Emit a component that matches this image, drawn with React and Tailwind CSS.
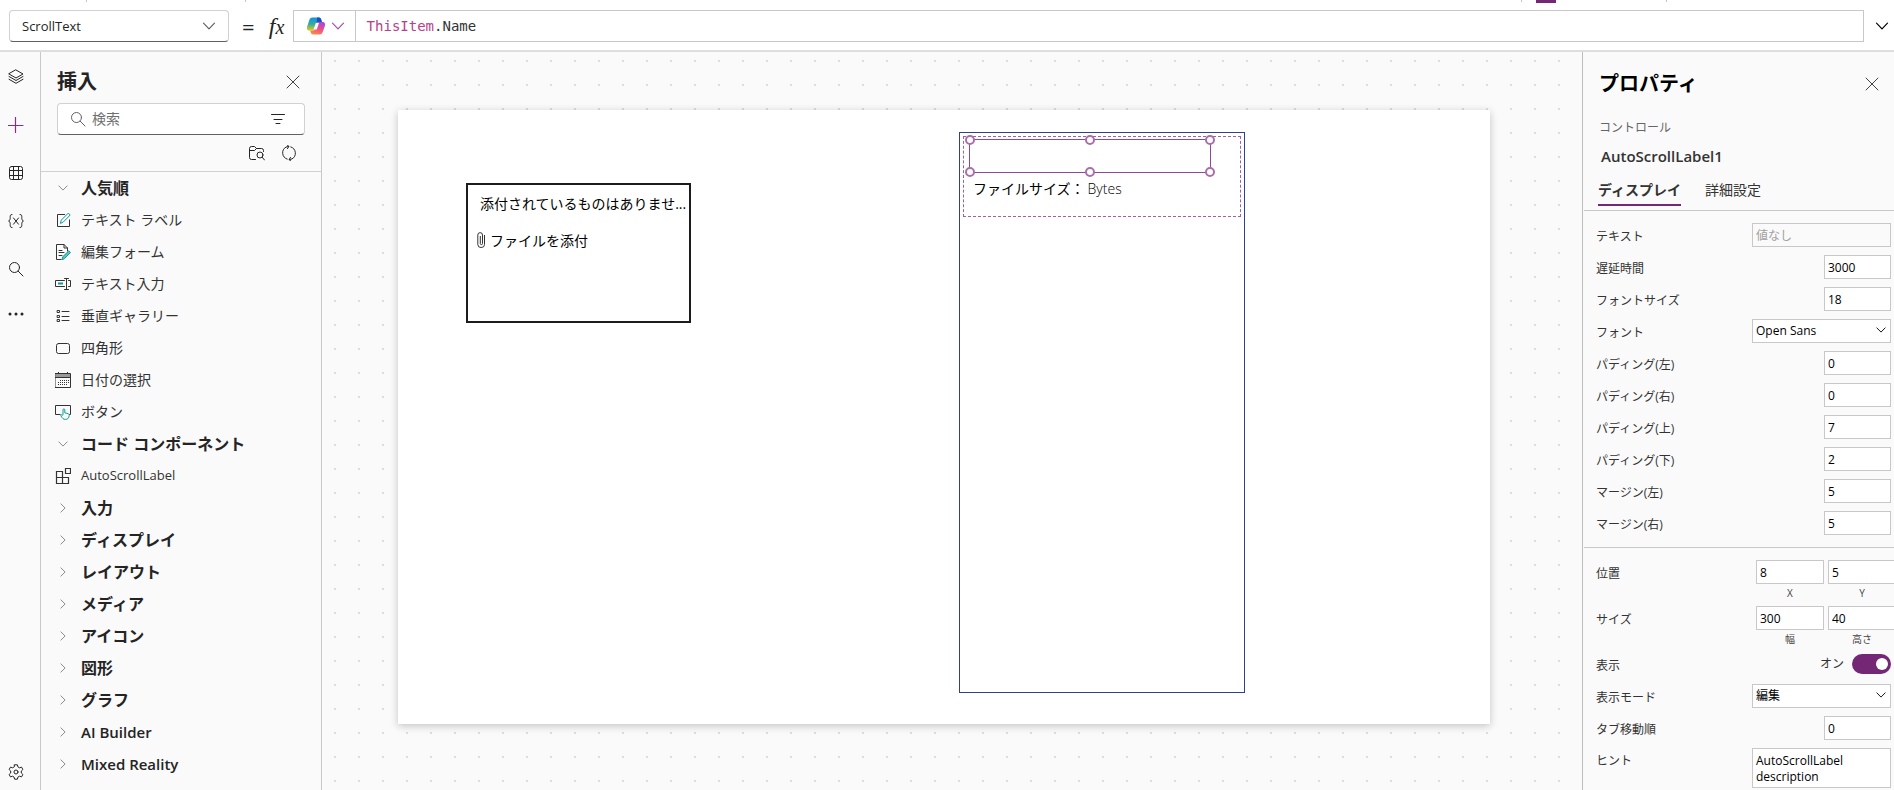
import React, { useState } from 'react';

function Icon({ className = '', size = 16, children }) {
  return (
    <svg
      width={size}
      height={size}
      viewBox="0 0 16 16"
      fill="none"
      stroke="currentColor"
      strokeLinecap="round"
      strokeLinejoin="round"
      className={`shrink-0 ${className}`}
      aria-hidden="true"
    >
      {children}
    </svg>
  );
}

const ChevronDown = (props) => (
  <Icon {...props}><path d="M2.5 5.2 8 10.8l5.5-5.6" strokeWidth="1.2" /></Icon>
);
const ChevronRight = (props) => (
  <Icon {...props}><path d="M5.2 2.5 10.8 8l-5.6 5.5" strokeWidth="1.2" /></Icon>
);
const CloseIcon = (props) => (
  <Icon {...props}><path d="m2 2 12 12M14 2 2 14" /></Icon>
);
const SearchIcon = (props) => (
  <Icon {...props}><circle cx="6.5" cy="6.5" r="5" /><path d="m10.2 10.2 4.8 4.8" /></Icon>
);
const FilterIcon = (props) => (
  <Icon {...props}><path d="M1.5 3.5h13M4 8.5h8M6 12.5h4" /></Icon>
);
const LayersIcon = (props) => (
  <Icon {...props}>
    <path d="M8 1 15 5 8 9 1 5z" />
    <path d="m1 7.5 7 4 7-4" />
    <path d="m1 10.3 7 4 7-4" />
  </Icon>
);
const GridIcon = (props) => (
  <Icon {...props}>
    <rect x="1.5" y="1.5" width="13" height="13" rx="2" />
    <path d="M5.5 1.5v13M10.5 1.5v13M1.5 5.5h13M1.5 10.5h13" />
  </Icon>
);
const VariableIcon = (props) => (
  <Icon {...props}>
    <path d="M4 1.5c-2 0-1.8 1.2-1.8 3S1.9 7.6.6 8c1.3.4 1.6 1.7 1.6 3.5s-.2 3 1.8 3M12 1.5c2 0 1.8 1.2 1.8 3s.3 3.1 1.6 3.5c-1.3.4-1.6 1.7-1.6 3.5s.2 3-1.8 3" />
    <path d="m5.500 5 5 6.200M10.500 5l-5 6.200" />
  </Icon>
);
const MoreIcon = (props) => (
  <Icon {...props}>
    <g fill="currentColor" stroke="none">
      <circle cx="2" cy="8" r="1.5" /><circle cx="8" cy="8" r="1.5" /><circle cx="14" cy="8" r="1.5" />
    </g>
  </Icon>
);
const GearIcon = (props) => (
  <Icon {...props}>
    <path d="M6.6.8h2.800l.5 2.100 1.500.9 2.100-.7 1.400 2.400-1.600 1.500v2l1.600 1.500-1.400 2.400-2.100-.7-1.500.9-.5 2.100H6.600l-.5-2.100-1.500-.9-2.100.7-1.400-2.400L2.700 9V7L1.100 5.500l1.400-2.400 2.100.7 1.500-.9z" />
    <circle cx="8" cy="8" r="2" />
  </Icon>
);
const FolderSearchIcon = (props) => (
  <Icon {...props}>
    <path d="M6.5 14.5h-4a2 2 0 0 1-2-2v-9a2 2 0 0 1 2-2h3l2 2h5a2 2 0 0 1 2 2v1M.5 5.5h5l2-2" />
    <circle cx="11" cy="10" r="3" />
    <path d="m13.2 12.200 2.300 2.800" />
  </Icon>
);
const RefreshIcon = (props) => (
  <Icon {...props}>
    <path d="M9.8 1.900A6.600 6.600 0 0 1 11 13.900L8.300 14.700M6.200 14.100A6.600 6.600 0 0 1 5 2.100L7.700 1.400" />
    <path d="m6-.2 1.900 1.600L6.500 3.600M10 16.200l-1.900-1.600 1.400-2.200" />
  </Icon>
);

// insert list icons
const TEAL = '#0f9b98';
const itemIcons = {
  label: (
    <Icon>
      <path d="M9.5 2.5h-7v12h12V8" strokeLinecap="square" />
      <path d="m5.500 11 .8-2.900 7-7 1.900 1.900-7 7.100z" stroke={TEAL} />
    </Icon>
  ),
  form: (
    <Icon>
      <path d="M6 15.500H1.500V.5H9l3.500 3.500V7M9 .5V4h3.500M4 6.500h3M4 8.500h5M4 11.500h3" />
      <path d="m7 15.500.8-2.800 6-5.900 1.700 1.700-5.900 6z" stroke={TEAL} fill="#5fc0bd" />
    </Icon>
  ),
  input: (
    <Icon>
      <path d="M9.500 4.500h-9v6h9M13.500 4.500h2v6h-2M9.500 2.500h4M9.500 13.500h4M11.500 2.500v11" />
      <path d="M3 7.500h5" stroke={TEAL} strokeWidth="2" strokeLinecap="butt" />
    </Icon>
  ),
  gallery: (
    <Icon>
      <path d="M2.500 2.500h2v2h-2zM2.500 7.500h2v2h-2zM2.500 11.500h2v2h-2zM7 3.500h7M7 8.500h7M7 12.500h7" />
    </Icon>
  ),
  rectangle: (
    <Icon><rect x="1.500" y="3.500" width="13" height="10" rx="2" /></Icon>
  ),
  date: (
    <Icon>
      <path d="M.5 2h15v3.500H.5z" fill="#9a9a9a" stroke="none" />
      <path d="M.5 1.500h15v14H.5zM.5 5.500h15M3.500.5v1M12.500.5v1" strokeLinecap="square" />
      <path d="M5 8.500h9M3 10.500h11M3 12.500h9" strokeDasharray="1 1" strokeLinecap="butt" />
    </Icon>
  ),
  button: (
    <Icon>
      <path d="M5 10.500H.5v-9h15v9H14" strokeLinecap="square" />
      <path d="M8 10.500V5.800c0-1.300 1.800-1.300 1.800 0v3l3.200.8c1 .3 1.300.9 1.200 1.800-.2 2.600-1.600 4-3.700 4-2.200 0-3.300-1.200-4.600-3.600-.5-1 .5-1.500 1.200-.8z" stroke={TEAL} fill="#fafafa" />
    </Icon>
  ),
  component: (
    <Icon>
      <path d="M1.500 3.500h6v12h-6zM1.500 9.500h12v6h-12M10.500.5h5v5h-5z" strokeLinecap="square" strokeLinejoin="miter" strokeWidth="1.2" />
    </Icon>
  ),
};

function CopilotLogo() {
  return (
    <svg width="20" height="20" viewBox="0 0 20 20" aria-hidden="true">
      <defs>
        <linearGradient id="cpBlue" x1="0" y1="0" x2="0" y2="1">
          <stop offset="0" stopColor="#1b8fe6" />
          <stop offset="0.5" stopColor="#2fae9b" />
          <stop offset="1" stopColor="#f4c81c" />
        </linearGradient>
        <linearGradient id="cpPink" x1="0.7" y1="0" x2="0.3" y2="1">
          <stop offset="0" stopColor="#a04be0" />
          <stop offset="0.5" stopColor="#ee4f86" />
          <stop offset="1" stopColor="#fb8a4a" />
        </linearGradient>
      </defs>
      <path d="M6.500 1.500H13c1.200 0 1.800.8 2.200 2l.8 2.500h-3c-1.500 0-2.200.8-2.600 2l-1.500 4.500c-.5 1.500-1.300 2.200-2.700 2.200H3.500C1 14.700.6 12.500 1.200 10.500L3.300 4c.6-1.700 1.600-2.500 3.200-2.500z" fill="url(#cpBlue)" />
      <path d="M11 1.500h2c1.200 0 1.800.8 2.200 2l.8 2.500h-3c-1 0-1.700.3-2.200 1z" fill="#1c4fc4" />
      <path d="M13.500 18.500H7c-1.200 0-1.800-.8-2.200-2L4.200 14.700h2c1.400 0 2.200-.7 2.700-2.200L10.400 8c.4-1.200 1.100-2 2.600-2h3.500c2.500 0 2.900 2.200 2.300 4.200l-2.100 5.800c-.6 1.700-1.600 2.500-3.200 2.500z" fill="url(#cpPink)" />
      <path d="M9.800 7h3.200l-2.300 6.500H7.500z" fill="#fff" />
    </svg>
  );
}

function FormulaBar() {
  return (
    <header className="relative z-10 shrink-0 border-b-2 border-[#dedede] bg-white">
      <div className="flex h-[10px] items-start">
        <div className="h-[2px] w-px ml-[86px] bg-[#c4c4c4]" />
        <div className="h-[2px] w-px ml-[158px] bg-[#c4c4c4]" />
        <div className="flex-1" />
        <div className="h-[2px] w-px bg-[#c4c4c4]" />
        <div className="ml-[14px] h-[3px] w-5 bg-[#742774]" />
        <div className="ml-[110px] mr-[227px] h-[2px] w-px bg-[#c4c4c4]" />
      </div>
      <div className="flex h-8 items-center pl-[9px]">
        <div className="relative w-[220px]">
          <select
            aria-label="プロパティ"
            className="h-8 w-full appearance-none rounded border border-[#d1d1d1] border-b-[#616161] bg-white pt-[2px] pl-3 text-[13px] text-[#242424]"
          >
            <option>ScrollText</option>
          </select>
          <ChevronDown className="pointer-events-none absolute right-3 top-2 text-[#616161]" />
        </div>
        <span className="ml-[13px] text-[22px] leading-8">=</span>
        <span className="ml-2 w-[28px] text-center font-['Liberation_Serif',serif] text-[24px] italic leading-8">
          f<span className="text-[20px]">x</span>
        </span>
        <div className="ml-[2px] flex h-8 min-w-0 flex-1 border border-[#c8c8c8]">
          <button aria-label="Copilot" className="flex w-[62px] items-center gap-1 border-r border-[#c8c8c8] pl-3">
            <CopilotLogo />
            <ChevronDown className="text-[#a84cae]" />
          </button>
          <code className="truncate pl-[11px] pt-[3px] font-['DejaVu_Sans_Mono',monospace] text-[14px] leading-6 text-[#333333]">
            <span className="text-[#b9408a]">ThisItem</span>.Name
          </code>
        </div>
        <button aria-label="展開" className="flex w-[30px] justify-end pr-1">
          <ChevronDown className="text-black" />
        </button>
      </div>
      <div className="h-2" />
    </header>
  );
}

function Rail() {
  return (
    <nav className="flex w-[41px] shrink-0 flex-col items-start border-r border-[#c8c8c8] pl-2 pt-[17px] pb-[10px]">
      <button aria-label="ツリー ビュー" className="flex h-4"><LayersIcon /></button>
      <button aria-label="挿入" className="mt-8 flex h-4 text-[#8b2a90]">
        <Icon><path d="M7.5.5v15M0 8.500h15" strokeWidth="1.2" /></Icon>
      </button>
      <button aria-label="データ" className="mt-8 flex h-4"><GridIcon /></button>
      <button aria-label="変数" className="mt-8 flex h-4"><VariableIcon /></button>
      <button aria-label="検索" className="mt-8 flex h-4"><SearchIcon /></button>
      <button aria-label="その他" className="mt-[29px] flex h-4"><MoreIcon /></button>
      <button aria-label="設定" className="mt-auto flex h-4"><GearIcon /></button>
    </nav>
  );
}

const popular = [
  { name: 'テキスト ラベル', icon: 'label' },
  { name: '編集フォーム', icon: 'form' },
  { name: 'テキスト入力', icon: 'input' },
  { name: '垂直ギャラリー', icon: 'gallery' },
  { name: '四角形', icon: 'rectangle' },
  { name: '日付の選択', icon: 'date' },
  { name: 'ボタン', icon: 'button' },
];

const collapsed = ['入力', 'ディスプレイ', 'レイアウト', 'メディア', 'アイコン', '図形', 'グラフ'];

function GroupRow({ name, open, latin }) {
  return (
    <button className="flex h-8 w-full items-center gap-3 pl-4 text-left font-bold text-[#242424]">
      <span className="flex w-3 justify-center text-[#808080]">
        {open ? <ChevronDown size={12} /> : <ChevronRight size={12} />}
      </span>
      <span className={latin ? 'text-[15px] font-semibold' : 'text-[16px]'}>{name}</span>
    </button>
  );
}

function ItemRow({ name, icon, latin }) {
  return (
    <button className="flex h-8 w-full items-center gap-[10px] pl-[14px] text-left text-[#333333]">
      {itemIcons[icon]}
      <span className={latin ? 'text-[13px]' : 'pb-[2px] text-[14px]'}>{name}</span>
    </button>
  );
}

function InsertPanel() {
  return (
    <aside className="w-[281px] shrink-0 overflow-hidden border-r border-[#c8c8c8]">
      <div className="border-b border-[#d1d1d1] px-4">
        <div className="flex h-[51px] items-end justify-between pb-[7px] pr-1">
          <h2 className="text-[20px] font-bold leading-7 text-[#242424]">挿入</h2>
          <button aria-label="閉じる" className="mb-[6px]"><CloseIcon className="text-[#424242]" /></button>
        </div>
        <div className="flex h-8 items-center rounded border border-[#d1d1d1] border-b-[#616161] bg-white px-3">
          <SearchIcon className="text-[#616161]" />
          <input
            aria-label="検索"
            placeholder="検索"
            className="ml-[6px] min-w-0 flex-1 bg-transparent pb-[2px] text-[14px] outline-none placeholder:text-[#707070]"
          />
          <FilterIcon className="mr-[6px]" />
        </div>
        <div className="flex h-9 items-center justify-end gap-4 pr-2">
          <button aria-label="参照"><FolderSearchIcon /></button>
          <button aria-label="更新"><RefreshIcon /></button>
        </div>
      </div>
      <GroupRow name="人気順" open />
      {popular.map((item) => <ItemRow key={item.name} {...item} />)}
      <GroupRow name="コード コンポーネント" open />
      <ItemRow name="AutoScrollLabel" icon="component" latin />
      {collapsed.map((name) => <GroupRow key={name} name={name} />)}
      <GroupRow name="AI Builder" latin />
      <GroupRow name="Mixed Reality" latin />
    </aside>
  );
}

function Handle({ className }) {
  return (
    <span className={`absolute h-[10px] w-[10px] -translate-x-1/2 -translate-y-1/2 rounded-full border-2 border-[#a86fac] bg-white ${className}`} />
  );
}

function Stage() {
  return (
    <main className="min-w-0 flex-1 overflow-hidden bg-[conic-gradient(from_270deg_at_2px_2px,#dcdcdc_90deg,transparent_0)] bg-size-[24px_24px] bg-position-[12px_8px] pl-[76px] pr-[92px] pt-[58px]">
      <div className="relative aspect-[1092/614] w-full bg-white shadow-[0_2px_8px_rgba(0,0,0,0.22)]">
        <div className="absolute left-[68px] top-[73px] h-[140px] w-[225px] border-2 border-[#1c1c1c] pt-[7px] text-[14px] text-black">
          <p className="whitespace-nowrap pl-3 leading-6">添付されているものはありませ...</p>
          <button className="mt-3 flex h-6 items-center gap-1 pl-2">
            <svg width="10" height="16" viewBox="0 0 10 16" fill="none" stroke="#333" aria-hidden="true">
              <path d="M8.500 3v9.500a3.300 3 0 0 1-6.700 0V3a2.200 2.200 0 0 1 4.700 0v8.500a1 1 0 0 1-2.200 0V4" />
            </svg>
            ファイルを添付
          </button>
        </div>
        <div className="absolute left-[561px] top-[22px] h-[561px] w-[286px] border border-[#2f4090]">
          <div className="absolute left-[3px] top-[3px] h-[81px] w-[278px] border border-dashed border-[#a25fa6]">
            <div className="absolute left-[5px] top-[2px] h-[34px] w-[242px] border border-[#8d4a92]">
              <Handle className="left-0 top-0" />
              <Handle className="left-1/2 top-0" />
              <Handle className="left-full top-0" />
              <Handle className="left-0 top-full" />
              <Handle className="left-1/2 top-full" />
              <Handle className="left-full top-full" />
            </div>
            <div className="flex pl-[9px] pt-10 text-[14px] leading-6 text-black">
              <span>ファイルサイズ：</span>
              <span className="pl-[3px] font-light">Bytes</span>
            </div>
          </div>
        </div>
      </div>
    </main>
  );
}

const fields = [
  { id: 'delay', label: '遅延時間', value: '3000' },
  { id: 'fontSize', label: 'フォントサイズ', value: '18' },
  { id: 'font', label: 'フォント', value: 'Open Sans', select: true },
  { id: 'padLeft', label: 'パディング(左)', value: '0' },
  { id: 'padRight', label: 'パディング(右)', value: '0' },
  { id: 'padTop', label: 'パディング(上)', value: '7' },
  { id: 'padBottom', label: 'パディング(下)', value: '2' },
  { id: 'marginLeft', label: 'マージン(左)', value: '5' },
  { id: 'marginRight', label: 'マージン(右)', value: '5' },
];

function Field({ id, label, value, select }) {
  return (
    <div className="flex h-8 items-center justify-between pl-3 pr-[3px]">
      <label htmlFor={id} className="pt-1 text-[#333333]">{label}</label>
      {select ? (
        <div className="relative w-[139px]">
          <select id={id} className="h-6 w-full appearance-none border border-[#c8c8c8] bg-white pl-[3px] text-black">
            <option>{value}</option>
          </select>
          <ChevronDown size={12} className="pointer-events-none absolute right-1 top-[5px] text-black" />
        </div>
      ) : (
        <input id={id} defaultValue={value} className="h-6 w-[67px] border border-[#c8c8c8] bg-white px-[3px] text-black" />
      )}
    </div>
  );
}

function PairField({ label, items }) {
  return (
    <div className="flex h-[46px] items-start justify-between pl-3" role="group" aria-label={label}>
      <span className="pt-[5px] text-[#333333]">{label}</span>
      <div className="-mr-[2px] flex gap-1">
        {items.map((item) => (
          <label key={item.caption} className="flex w-[68px] flex-col text-center text-[10px] leading-[18px] text-[#444444]">
            <input defaultValue={item.value} className="h-6 w-full border border-[#c8c8c8] bg-white px-[3px] text-[12px] text-black" />
            {item.caption}
          </label>
        ))}
      </div>
    </div>
  );
}

function PropertiesPanel() {
  const [visible, setVisible] = useState(true);

  return (
    <aside className="w-[312px] shrink-0 overflow-hidden border-l border-[#bdbdbd] text-[12px]">
      <div className="flex h-16 items-center justify-between pl-4 pr-[14px]">
        <h2 className="text-[20px] font-bold leading-7 text-black">プロパティ</h2>
        <button aria-label="閉じる"><CloseIcon className="text-[#424242]" /></button>
      </div>
      <div className="px-4">
        <p className="pt-[2px] leading-5 text-[#666666]">コントロール</p>
        <p className="mt-[6px] pl-[2px] text-[15px] font-semibold leading-6 text-[#333333]">AutoScrollLabel1</p>
      </div>
      <div className="ml-px flex gap-6 border-b border-[#c8c8c8] pb-1 pl-[14px] pt-2 text-[14px] leading-7 text-[#333333]" role="tablist">
        <button role="tab" aria-selected="true" className="border-b-2 border-[#742774] font-bold">ディスプレイ</button>
        <button role="tab" aria-selected="false" className="border-b-2 border-transparent">詳細設定</button>
      </div>
      <div className="ml-px border-b border-[#c8c8c8] py-2 pr-0">
        <div className="flex h-8 items-center justify-between pl-3 pr-[3px]">
          <label htmlFor="text" className="pt-1 text-[#333333]">テキスト</label>
          <input id="text" placeholder="値なし" className="h-6 w-[139px] border border-[#c8c8c8] px-[3px] placeholder:text-[#a0a0a0]" />
        </div>
        {fields.map((field) => <Field key={field.id} {...field} />)}
      </div>
      <div className="ml-px pt-3">
        <PairField label="位置" items={[{ caption: 'X', value: '8' }, { caption: 'Y', value: '5' }]} />
        <PairField label="サイズ" items={[{ caption: '幅', value: '300' }, { caption: '高さ', value: '40' }]} />
        <div className="-mt-1 flex h-8 items-center justify-between pl-3 pr-[3px] text-[#333333]">
          <label htmlFor="visible" className="pt-1">表示</label>
          <span className="flex items-center gap-2">
            {visible ? 'オン' : 'オフ'}
            <input
              id="visible"
              type="checkbox"
              role="switch"
              checked={visible}
              onChange={(e) => setVisible(e.target.checked)}
              className="h-5 w-[39px] appearance-none rounded-full bg-gray-400 px-[3px] py-1 before:block before:h-3 before:w-3 before:rounded-full before:bg-white checked:bg-[#742774] checked:before:ml-auto"
            />
          </span>
        </div>
        <Field id="displayMode" label="表示モード" value="編集" select />
        <Field id="tabIndex" label="タブ移動順" value="0" />
        <div className="flex items-start justify-between pl-3 pr-[3px] pt-1">
          <label htmlFor="hint" className="pt-1 text-[#333333]">ヒント</label>
          <textarea
            id="hint"
            defaultValue="AutoScrollLabel description"
            className="h-10 w-[139px] resize-none overflow-hidden border border-[#c8c8c8] bg-white px-[3px] pt-1 leading-4 text-black"
          />
        </div>
      </div>
    </aside>
  );
}

export default function App() {
  return (
    <div className="flex h-screen flex-col overflow-hidden bg-[#fafafa] font-['Open_Sans','Noto_Sans_CJK_JP',sans-serif] text-[#242424]">
      <FormulaBar />
      <div className="flex min-h-0 flex-1">
        <Rail />
        <InsertPanel />
        <Stage />
        <PropertiesPanel />
      </div>
    </div>
  );
}
